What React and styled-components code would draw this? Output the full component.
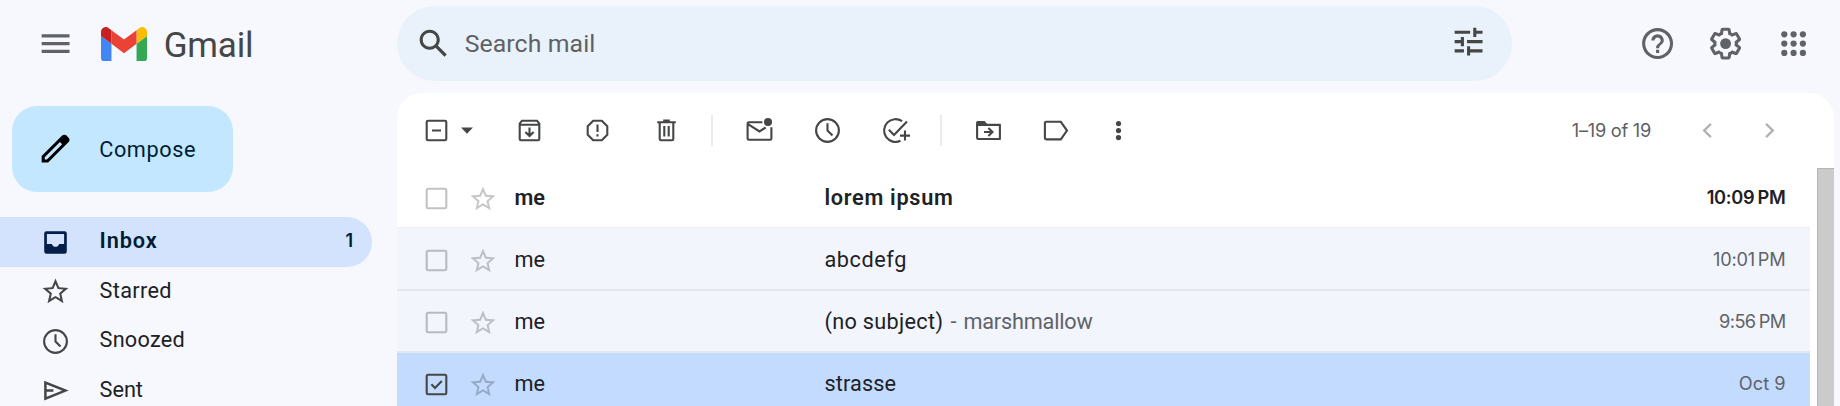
import React from "react";
import styled, { createGlobalStyle } from "styled-components";

const GlobalStyle = createGlobalStyle`
  *, *::before, *::after { box-sizing: border-box; }
  body { margin: 0; background: #f7f8fd; overflow: hidden; }
  button { font: inherit; color: inherit; background: none; border: 0; padding: 0; }
`;

const Page = styled.div`
  display: flex;
  width: 1840px;
  height: 406px;
  overflow: hidden;
  background: #f7f8fd;
  font-family: Roboto, "Liberation Sans", sans-serif;
  font-size: 21.7px;
  color: #202124;
`;

const Sidebar = styled.aside`
  flex: 0 0 397px;
  display: flex;
  flex-direction: column;
`;

const Brand = styled.div`
  flex: none;
  display: flex;
  align-items: center;
  height: 87px;
  padding-left: 37px;
`;

const Wordmark = styled.span`
  margin-left: 16.5px;
  padding-top: 4px;
  font-size: 35px;
  line-height: 40px;
  letter-spacing: -0.2px;
  color: #444746;
`;

const LogoSvg = styled.svg`
  margin: 1px 0 0 27px;
`;

const Icon = styled.svg`
  display: block;
  flex: none;
  width: ${(p) => p.$size}px;
  height: ${(p) => p.$size}px;
  color: ${(p) => p.$color || "#444746"};
`;

const ComposeButton = styled.button`
  flex: none;
  display: flex;
  align-items: center;
  width: 221px;
  height: 86px;
  margin: 19px 0 25px 12px;
  padding-left: 25px;
  gap: 25px;
  border-radius: 25px;
  background: #c2e7ff;
  color: #001d35;
  letter-spacing: 0.6px;
`;

const NavItem = styled.a`
  flex: none;
  display: flex;
  align-items: center;
  width: 372px;
  height: ${(p) => (p.$active ? 50 : 49.6)}px;
  padding: 0 19px 0 40px;
  border-radius: 0 25px 25px 0;
  background: ${(p) => (p.$active ? "#d3e3fd" : "transparent")};
  color: ${(p) => (p.$active ? "#001d35" : "#202124")};
  font-weight: ${(p) => (p.$active ? 600 : 400)};
`;

const NavLabel = styled.span`
  flex: 1;
  margin-left: 28.5px;
  padding-bottom: 3px;
  letter-spacing: ${(p) => p.$spacing}px;
`;

const NavCount = styled.span`
  padding-bottom: 3px;
  font-family: Inter, sans-serif;
  font-size: 18px;
`;

const Main = styled.div`
  flex: 1;
  display: flex;
  flex-direction: column;
  min-width: 0;
`;

const TopBar = styled.header`
  flex: none;
  display: flex;
  align-items: center;
  height: 93px;
  padding-bottom: 6px;
`;

const SearchBar = styled.div`
  display: flex;
  align-items: center;
  width: 1115px;
  height: 75px;
  padding: 0 24.5px 0 18px;
  border-radius: 37.5px;
  background: #e9f1fb;
`;

const SearchText = styled.span`
  flex: 1;
  margin-left: 12.5px;
  padding-bottom: 1px;
  font-size: 24.8px;
  letter-spacing: 0.1px;
  color: #5f6163;
`;

const SliderSlot = styled.span`
  padding-bottom: 3px;
`;

const TopActions = styled.div`
  display: flex;
  align-items: center;
  gap: 30.8px;
  margin-left: 127px;
`;

const Panel = styled.main`
  flex: 1;
  width: 1437px;
  display: flex;
  flex-direction: column;
  border-radius: 25px 25px 0 0;
  background: #fff;
  overflow: hidden;
`;

const Toolbar = styled.div`
  display: flex;
  align-items: center;
  flex: 0 0 73px;
  padding: 2px 49px 0 24px;
`;

const ToolGroup = styled.div`
  display: flex;
  align-items: center;
  gap: 37.2px;
  margin-left: ${(p) => p.$before}px;
`;

const Divider = styled.span`
  width: 1.5px;
  height: 31px;
  margin-left: 29.5px;
  background: #e9ebee;
`;

const Pager = styled.div`
  display: flex;
  align-items: center;
  margin-left: auto;
  color: #5e6063;
`;

const PagerText = styled.span`
  margin-right: 41px;
  padding-bottom: 1px;
  font-family: Inter, sans-serif;
  font-size: 18.2px;
  letter-spacing: -0.25px;
`;

const Content = styled.div`
  flex: 1;
  display: flex;
  justify-content: space-between;
`;

const List = styled.div`
  width: 1413px;
`;

const backgrounds = { unread: "#fff", read: "#f2f5fc", selected: "#c2dbff" };

const MailRow = styled.div`
  display: grid;
  grid-template-columns: 47px 46.5px 310px 1fr auto;
  align-items: center;
  height: 62px;
  padding: 3px 24.5px 0 24px;
  background: ${(p) => backgrounds[p.$state]};
  box-shadow: inset 0 ${(p) => p.$line}px 0 #e3e7ee, inset 0 -1px 0 ${(p) => (p.$state === "unread" ? "#eceff3" : "#e3e7ee")};
  font-weight: ${(p) => (p.$state === "unread" ? 600 : 400)};
`;

const MailText = styled.span`
  padding-bottom: 3px;
  letter-spacing: ${(p) => p.$spacing || 0}px;
  white-space: pre;
`;

const Snippet = styled.span`
  color: #5f6368;
  letter-spacing: -0.2px;
  word-spacing: 2px;
`;

const MailTime = styled.span`
  padding-bottom: 3px;
  font-family: Inter, sans-serif;
  font-size: 18.2px;
  letter-spacing: ${(p) => p.$spacing}px;
  word-spacing: ${(p) => p.$word}px;
  color: ${(p) => (p.$unread ? "#202124" : "#5f6368")};
`;

const ScrollThumb = styled.div`
  width: 17px;
  margin-top: 2px;
  background: #cbcbcb;
  border-top: 1.5px solid #b5b5b5;
  border-left: 1.5px solid #b5b5b5;
`;

/* 24-unit glyph filled with the current colour */
const Glyph = ({ d, size = 37.2, color, children }) => (
  <Icon viewBox="0 0 24 24" $size={size} $color={color} fill="currentColor">
    {d && <path d={d} />}
    {children}
  </Icon>
);

/* 31-unit line icon */
const LineIcon = ({ color, children }) => (
  <Icon viewBox="0 0 31 31" $size={31} $color={color} fill="none" stroke="currentColor" strokeWidth="2.1">
    {children}
  </Icon>
);

const paths = {
  menu: "M3 18h18v-2H3v2zm0-5h18v-2H3v2zm0-7v2h18V6H3z",
  pencil:
    "M20.41 4.94l-1.35-1.35c-.78-.78-2.05-.78-2.83 0L3 16.82V21h4.18L20.41 7.77c.79-.78.79-2.05 0-2.83zm-14 14.12L5 19v-1.36l9.82-9.82 1.41 1.41-9.82 9.83z",
  search:
    "M20.49 19l-5.73-5.73C15.53 12.2 16 10.91 16 9.5 16 5.91 13.09 3 9.5 3S3 5.91 3 9.5 5.91 16 9.5 16c1.41 0 2.7-.47 3.77-1.24L19 20.49 20.49 19zM5 9.5C5 7.01 7.01 5 9.5 5S14 7.01 14 9.5 11.99 14 9.5 14 5 11.99 5 9.5z",
  tune: "M3 17v2h6v-2H3zM3 5v2h10V5H3zm10 16v-2h8v-2h-8v-2h-2v6h2zM7 9v2H3v2h4v2h2V9H7zm14 4v-2H11v2h10zm-6-4h2V7h4V5h-4V3h-2v6z",
  help: "M11 18h2v-2h-2v2zm1-16C6.48 2 2 6.48 2 12s4.48 10 10 10 10-4.48 10-10S17.52 2 12 2zm0 18c-4.41 0-8-3.59-8-8s3.59-8 8-8 8 3.59 8 8-3.59 8-8 8zm0-14c-2.21 0-4 1.79-4 4h2c0-1.1.9-2 2-2s2 .9 2 2c0 2-3 1.75-3 5h2c0-2.25 3-2.5 3-5 0-2.21-1.79-4-4-4z",
  gear: "M13.85 22.25h-3.7c-.74 0-1.36-.54-1.45-1.27l-.27-1.89c-.27-.14-.53-.29-.79-.46l-1.8.72c-.7.26-1.47-.03-1.81-.65L2.2 15.53c-.35-.66-.2-1.44.36-1.88l1.53-1.19c-.01-.15-.02-.3-.02-.46 0-.15.01-.31.02-.46l-1.52-1.19c-.59-.45-.74-1.26-.37-1.88l1.85-3.19c.34-.62 1.11-.9 1.79-.63l1.81.73c.26-.17.52-.32.78-.46l.27-1.91c.09-.7.71-1.25 1.44-1.25h3.7c.74 0 1.36.54 1.45 1.27l.27 1.89c.27.14.53.29.79.46l1.8-.72c.71-.26 1.48.03 1.82.65l1.84 3.18c.36.66.2 1.44-.36 1.88l-1.52 1.19c.01.15.02.3.02.46s-.01.31-.02.46l1.52 1.19c.56.45.72 1.23.37 1.86l-1.86 3.22c-.34.62-1.11.9-1.8.63l-1.8-.72c-.26.17-.52.32-.78.46l-.27 1.91c-.1.68-.72 1.22-1.46 1.22zm-3.23-2h2.76l.37-2.55.53-.22c.44-.18.88-.44 1.34-.78l.45-.34 2.38.96 1.38-2.4-2.03-1.58.07-.56c.03-.26.06-.51.06-.78s-.03-.53-.06-.78l-.07-.56 2.03-1.58-1.39-2.4-2.39.96-.45-.35c-.42-.32-.87-.58-1.33-.77l-.52-.22-.37-2.55h-2.76l-.37 2.55-.53.21c-.44.19-.88.44-1.34.79l-.45.33-2.38-.95-1.39 2.39 2.03 1.58-.07.56a7 7 0 0 0-.06.79c0 .26.02.53.06.78l.07.56-2.03 1.58 1.38 2.4 2.39-.96.45.35c.43.33.86.58 1.33.77l.53.22.38 2.55z",
  star: "M22 9.24l-7.19-.62L12 2 9.19 8.63 2 9.24l5.46 4.73L5.82 21 12 17.27 18.18 21l-1.63-7.03L22 9.24zM12 15.4l-3.76 2.27 1-4.28-3.32-2.88 4.38-.38L12 6.1l1.71 4.04 4.38.38-3.32 2.88 1 4.28L12 15.4z",
};

const Logo = () => (
  <LogoSvg width="46" height="34.5" viewBox="52 42 88 66">
    <path fill="#4285f4" d="M58 108h14V74L52 59v43c0 3.32 2.69 6 6 6" />
    <path fill="#34a853" d="M120 108h14c3.32 0 6-2.69 6-6V59l-20 15" />
    <path fill="#fbbc04" d="M120 48v26l20-15v-8c0-7.42-8.47-11.65-14.4-7.2" />
    <path fill="#ea4335" d="M72 74V48l24 18 24-18v26L96 92" />
    <path fill="#c5221f" d="M52 51v8l20 15V48l-5.6-4.2c-5.94-4.45-14.4-.22-14.4 7.2" />
  </LogoSvg>
);

const AppsIcon = () => (
  <Glyph color="#5f6368">
    {[6, 12, 18].flatMap((y) => [6, 12, 18].map((x) => <circle key={`${x}-${y}`} cx={x} cy={y} r="2" />))}
  </Glyph>
);

const Checkbox = ({ mark, color }) => (
  <LineIcon color={color}>
    <rect x="5.7" y="5.7" width="19.6" height="19.6" rx="1.4" />
    {mark === "minus" && <path d="M11 15.5h9" />}
    {mark === "check" && <path d="M10.4 15.3l3.6 3.6 6.8-7" />}
  </LineIcon>
);

const CaretIcon = () => (
  <Icon viewBox="0 0 12 12" $size={12} fill="currentColor">
    <path d="M0 2.6h12L6 8.8z" />
  </Icon>
);

const ArchiveIcon = () => (
  <LineIcon>
    <path d="M5.7 8.6l2.3-2.9h15l2.3 2.9V24q0 1.3-1.3 1.3H7q-1.3 0-1.3-1.3zM6 9.7h19M15.5 12.6v8M11.4 17l4.1 4.1 4.1-4.1" />
  </LineIcon>
);

const ReportIcon = () => (
  <LineIcon>
    <path d="M11.2 5.7h8.6l5.5 5.5v8.6l-5.5 5.5h-8.6l-5.5-5.5v-8.6z" strokeLinejoin="round" />
    <path d="M15.5 9.4v7.6M15.5 19.3v2.2" />
  </LineIcon>
);

const TrashIcon = () => (
  <LineIcon>
    <path d="M6.2 7.3h18.6M12.2 5.5h6.6M8.7 7.3V24q0 1.3 1.3 1.3h11q1.3 0 1.3-1.3V7.3M13.3 11v10.6M17.7 11v10.6" />
  </LineIcon>
);

const UnreadIcon = () => (
  <LineIcon>
    <path d="M18.4 7.3H4.9q-1.3 0-1.3 1.3v14.8q0 1.3 1.3 1.3h21.2q1.3 0 1.3-1.3V12.2M4 9.2l11.5 7.2 6.2-3.9" />
    <circle cx="24" cy="6.9" r="4" fill="currentColor" stroke="none" />
  </LineIcon>
);

const ClockIcon = () => (
  <LineIcon>
    <circle cx="15.5" cy="15.5" r="11.4" />
    <path d="M15.5 8.2v7.4l5 5" />
  </LineIcon>
);

const AddTaskIcon = () => (
  <LineIcon>
    <path d="M22 6.2A11.4 11.4 0 1 0 20.5 25.8M8.8 14.7l5.2 5.2L27 6.6M25 15.6v10M20 20.6h10" />
  </LineIcon>
);

const MoveIcon = () => (
  <LineIcon>
    <path d="M4.1 9.9h22.8V24H5.3q-1.2 0-1.2-1.2z" strokeLinejoin="round" />
    <path d="M3.1 11V7.5Q3.1 6 4.6 6h7l3 3.5V11z" fill="currentColor" stroke="none" />
    <path d="M11 17h8M15.4 12.9l4.1 4.1-4.1 4.1" />
  </LineIcon>
);

const LabelIcon = () => (
  <LineIcon>
    <path d="M5.2 6.8h14.6l6.2 8.8-6.2 8.8H5.2Q3.9 24.4 3.9 23.1v-15Q3.9 6.8 5.2 6.8z" />
  </LineIcon>
);

const MoreIcon = () => (
  <LineIcon>
    {[8.6, 15.6, 22.6].map((y) => (
      <circle key={y} cx="15.5" cy={y} r="2.6" fill="currentColor" stroke="none" />
    ))}
  </LineIcon>
);

const ChevronIcon = ({ d }) => (
  <LineIcon color="#b0b2b3">
    <path d={d} strokeWidth="2.4" />
  </LineIcon>
);

const InboxIcon = () => (
  <LineIcon color="#041e49">
    <path
      fill="currentColor"
      fillRule="evenodd"
      stroke="none"
      d="M6.5 4.2h18q2.3 0 2.3 2.3v17.9q0 2.3-2.3 2.3h-18q-2.3 0-2.3-2.3V6.5q0-2.3 2.3-2.3zM6.9 6.9v10h5q.7 2.8 3.6 2.8t3.6-2.8h5v-10z"
    />
  </LineIcon>
);

const SentIcon = () => (
  <LineIcon>
    <path d="M5.4 7.5v16.2l20-8.1zM5.4 15.6h8" strokeWidth="2.5" />
  </LineIcon>
);

const folders = [
  { label: "Inbox", icon: <InboxIcon />, spacing: 0.9, count: 1, active: true },
  { label: "Starred", icon: <Glyph d={paths.star} size={31} />, spacing: 0.35 },
  { label: "Snoozed", icon: <ClockIcon />, spacing: 0.25 },
  { label: "Sent", icon: <SentIcon />, spacing: 0 },
];

const mails = [
  { subject: "lorem ipsum", spacing: 0.7, time: "10:09 PM", timeSpacing: -0.3, word: -1, state: "unread", line: 0 },
  { subject: "abcdefg", spacing: 0.55, time: "10:01 PM", timeSpacing: -0.2, word: -2, state: "read", line: 0 },
  { subject: "(no subject)", spacing: 0.3, snippet: "marshmallow", time: "9:56 PM", timeSpacing: -0.6, word: -1.4, state: "read", line: 1 },
  { subject: "strasse", spacing: 0.1, time: "Oct 9", timeSpacing: 0, word: 0, state: "selected", line: 1 },
];

export default function App() {
  return (
    <Page>
      <GlobalStyle />
      <Sidebar>
        <Brand>
          <Glyph d={paths.menu} color="#5f6368" />
          <Logo />
          <Wordmark>Gmail</Wordmark>
        </Brand>
        <ComposeButton>
          <Glyph d={paths.pencil} color="#000" />
          Compose
        </ComposeButton>
        {folders.map((f) => (
          <NavItem key={f.label} $active={f.active}>
            {f.icon}
            <NavLabel $spacing={f.spacing}>{f.label}</NavLabel>
            {f.count && <NavCount>{f.count}</NavCount>}
          </NavItem>
        ))}
      </Sidebar>
      <Main>
        <TopBar>
          <SearchBar>
            <Glyph d={paths.search} />
            <SearchText>Search mail</SearchText>
            <SliderSlot>
              <Glyph d={paths.tune} />
            </SliderSlot>
          </SearchBar>
          <TopActions>
            <Glyph d={paths.help} color="#5f6368" />
            <Glyph d={paths.gear} color="#5f6368">
              <circle cx="12" cy="12" r="3.5" />
            </Glyph>
            <AppsIcon />
          </TopActions>
        </TopBar>
        <Panel>
          <Toolbar>
            <ToolGroup $before={0}>
              <Checkbox mark="minus" />
            </ToolGroup>
            <ToolGroup $before={9}>
              <CaretIcon />
            </ToolGroup>
            <ToolGroup $before={41.2}>
              <ArchiveIcon />
              <ReportIcon />
              <TrashIcon />
            </ToolGroup>
            <Divider />
            <ToolGroup $before={31}>
              <UnreadIcon />
              <ClockIcon />
              <AddTaskIcon />
            </ToolGroup>
            <Divider />
            <ToolGroup $before={31}>
              <MoveIcon />
              <LabelIcon />
            </ToolGroup>
            <ToolGroup $before={31}>
              <MoreIcon />
            </ToolGroup>
            <Pager>
              <PagerText>1–19 of 19</PagerText>
              <ChevronIcon d="M18.9 8.8l-6.7 6.7 6.7 6.7" />
              <ToolGroup $before={31}>
                <ChevronIcon d="M12.1 8.8l6.7 6.7-6.7 6.7" />
              </ToolGroup>
            </Pager>
          </Toolbar>
          <Content>
            <List>
              {mails.map((m) => (
                <MailRow key={m.subject} $state={m.state} $line={m.line}>
                  <Checkbox
                    mark={m.state === "selected" ? "check" : undefined}
                    color={m.state === "selected" ? "#444746" : "rgba(0,0,0,.24)"}
                  />
                  <Glyph d={paths.star} size={30} color="rgba(0,0,0,.22)" />
                  <MailText>me</MailText>
                  <MailText $spacing={m.spacing}>
                    {m.subject}
                    {m.snippet && <Snippet>{` - ${m.snippet}`}</Snippet>}
                  </MailText>
                  <MailTime $spacing={m.timeSpacing} $word={m.word} $unread={m.state === "unread"}>
                    {m.time}
                  </MailTime>
                </MailRow>
              ))}
            </List>
            <ScrollThumb />
          </Content>
        </Panel>
      </Main>
    </Page>
  );
}
